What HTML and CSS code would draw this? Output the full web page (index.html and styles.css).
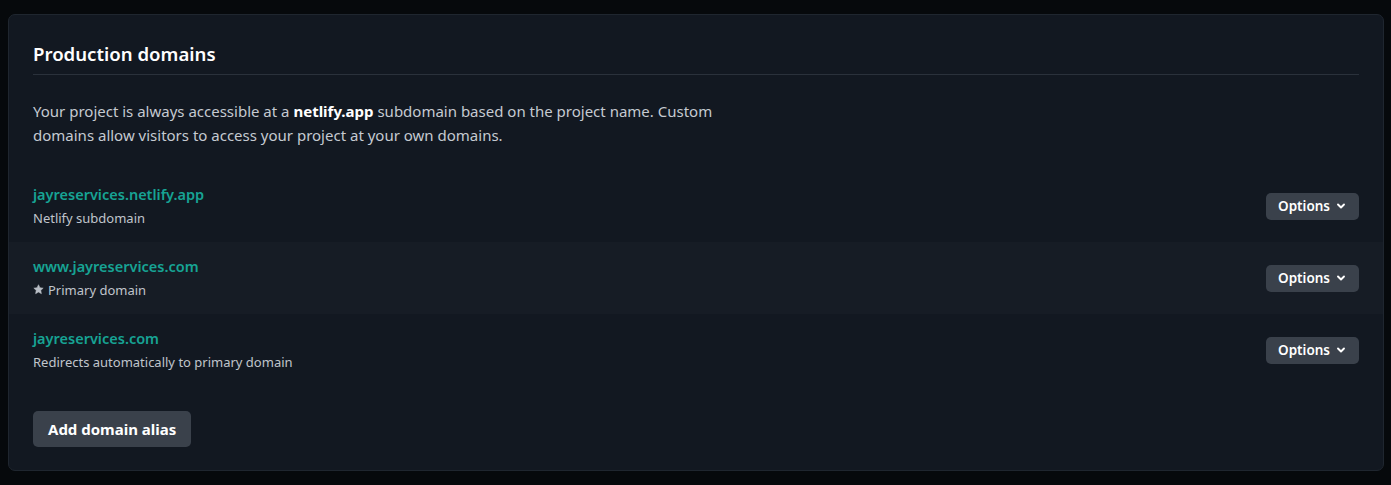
FILE: index.html
```html
<!DOCTYPE html>
<html lang="en">
<head>
<meta charset="utf-8">
<title>Production domains</title>
<link rel="stylesheet" href="styles.css">
</head>
<body>
<section class="card">
  <header class="card-head">
    <h2 class="card-title">Production domains</h2>
  </header>
  <p class="intro">Your project is always accessible at a <strong>netlify.app</strong> subdomain based on the project name. Custom domains allow visitors to access your project at your own domains.</p>
  <ul class="domains">
    <li class="domain">
      <div class="domain-info">
        <a class="domain-name" href="#">jayreservices.netlify.app</a>
        <div class="domain-sub">Netlify subdomain</div>
      </div>
      <button class="btn-options" type="button">Options <svg class="chev" viewBox="0 0 10 10" width="10" height="10"><path d="M2 3.5 L5 6.5 L8 3.5" fill="none" stroke="currentColor" stroke-width="1.9" stroke-linecap="round" stroke-linejoin="round"/></svg></button>
    </li>
    <li class="domain domain-alt">
      <div class="domain-info">
        <a class="domain-name" href="#">www.jayreservices.com</a>
        <div class="domain-sub"><svg class="star" viewBox="0 0 12 12" width="11" height="11"><path d="M6 0.8 L7.55 4.05 L11.1 4.5 L8.5 6.95 L9.15 10.5 L6 8.78 L2.85 10.5 L3.5 6.95 L0.9 4.5 L4.45 4.05 Z" fill="currentColor" stroke="currentColor" stroke-width="0.6" stroke-linejoin="round"/></svg>Primary domain</div>
      </div>
      <button class="btn-options" type="button">Options <svg class="chev" viewBox="0 0 10 10" width="10" height="10"><path d="M2 3.5 L5 6.5 L8 3.5" fill="none" stroke="currentColor" stroke-width="1.9" stroke-linecap="round" stroke-linejoin="round"/></svg></button>
    </li>
    <li class="domain">
      <div class="domain-info">
        <a class="domain-name" href="#">jayreservices.com</a>
        <div class="domain-sub">Redirects automatically to primary domain</div>
      </div>
      <button class="btn-options" type="button">Options <svg class="chev" viewBox="0 0 10 10" width="10" height="10"><path d="M2 3.5 L5 6.5 L8 3.5" fill="none" stroke="currentColor" stroke-width="1.9" stroke-linecap="round" stroke-linejoin="round"/></svg></button>
    </li>
  </ul>
  <div class="card-foot">
    <button class="btn-add" type="button">Add domain alias</button>
  </div>
</section>
</body>
</html>
```

FILE: styles.css
```css
* { box-sizing: border-box; }
html, body { margin: 0; padding: 0; }
body {
  background: #06090c;
  font-family: "Noto Sans", "Open Sans", sans-serif;
  color: #c5cad1;
  padding: 14px 7px 14px 8px;
}
.card {
  background: #121821;
  border: 1px solid #1f262f;
  border-radius: 7px;
  padding: 26px 0 23px 0;
}
.card-head {
  margin: 0 24px;
  padding-bottom: 7px;
  border-bottom: 1px solid #2a313b;
}
.card-title {
  margin: 0;
  font-size: 18.6px;
  line-height: 26px;
  font-weight: 600;
  color: #ffffff;
}
.intro {
  margin: 24px 24px 23px;
  max-width: 690px;
  font-size: 15px;
  line-height: 24px;
  color: #c5cad1;
}
.intro strong { color: #ffffff; font-weight: 700; }
.domains {
  list-style: none;
  margin: 0;
  padding: 0;
}
.domain {
  display: flex;
  align-items: center;
  justify-content: space-between;
  height: 72px;
  padding: 0 24px;
}
.domain-alt { background: #161c25; }
.domain-info {
  display: flex;
  flex-direction: column;
}
.domain-name {
  font-size: 14.5px;
  line-height: 20px;
  font-weight: 600;
  color: #17a394;
  text-decoration: none;
}
.domain-sub {
  display: flex;
  align-items: center;
  gap: 4px;
  margin-top: 3px;
  font-size: 13px;
  line-height: 22px;
  color: #c0c5cc;
}
.star { color: #b9bec6; }
.btn-options {
  display: inline-flex;
  align-items: center;
  gap: 6px;
  height: 27px;
  padding: 0 13px 0 12px;
  border: 0;
  border-radius: 5px;
  background: #3a414b;
  color: #ffffff;
  font-family: inherit;
  font-size: 13.5px;
  font-weight: 600;
}
.chev { display: block; }
.card-foot {
  padding: 25px 24px 0;
}
.btn-add {
  height: 36px;
  padding: 0 15px;
  border: 0;
  border-radius: 5px;
  background: #3a414b;
  color: #ffffff;
  font-family: inherit;
  font-size: 15px;
  font-weight: 700;
}
```
